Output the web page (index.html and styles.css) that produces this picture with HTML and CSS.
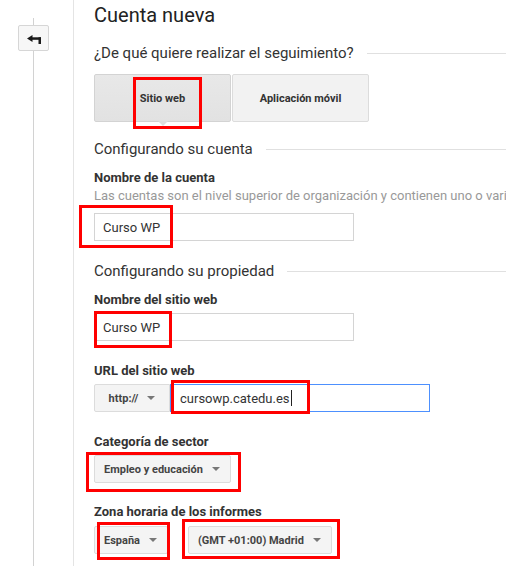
FILE: index.html
```html
<!DOCTYPE html>
<html lang="es">
<head>
<meta charset="utf-8">
<title>Cuenta nueva</title>
<link rel="stylesheet" href="styles.css">
</head>
<body>
<div class="page">
  <aside class="rail">
    <span class="rail-seg"></span>
    <button class="back" type="button" aria-label="Volver">
      <svg width="14" height="9" viewBox="0 0 14 9"><path d="M0 3.5 L5.5 0 L5.5 7 Z" fill="#1a1a1a"/><rect x="4" y="2.3" width="10" height="2.5" fill="#1a1a1a"/><rect x="11.5" y="2.3" width="2.5" height="6.7" fill="#1a1a1a"/></svg>
    </button>
    <span class="rail-line"></span>
  </aside>
  <main class="content">
    <h1 class="title">Cuenta nueva</h1>
    <div class="section q">
      <span>¿De qué quiere realizar el seguimiento?</span><span class="rule"></span>
    </div>
    <div class="tabs">
      <div class="tab active">Sitio web<span class="notch"></span></div>
      <div class="tab">Aplicación móvil</div>
    </div>
    <div class="section s1">
      <span>Configurando su cuenta</span><span class="rule"></span>
    </div>
    <div class="label l1">Nombre de la cuenta</div>
    <div class="desc">Las cuentas son el nivel superior de organización y contienen uno o varias</div>
    <div class="input i1">Curso WP</div>
    <div class="section s2">
      <span>Configurando su propiedad</span><span class="rule"></span>
    </div>
    <div class="label l2">Nombre del sitio web</div>
    <div class="input i2">Curso WP</div>
    <div class="label l3">URL del sitio web</div>
    <div class="row">
      <div class="btn proto">http://<span class="caret"></span></div>
      <div class="input url">cursowp.catedu.es<span class="cursor"></span></div>
    </div>
    <div class="label l3">Categoría de sector</div>
    <div class="row">
      <div class="btn">Empleo y educación<span class="caret"></span></div>
    </div>
    <div class="label l4">Zona horaria de los informes</div>
    <div class="row gap">
      <div class="btn">España<span class="caret"></span></div>
      <div class="btn">(GMT +01:00) Madrid<span class="caret"></span></div>
    </div>
  </main>
  <span class="mark m1"></span>
  <span class="mark m2"></span>
  <span class="mark m3"></span>
  <span class="mark m4"></span>
  <span class="mark m5"></span>
  <span class="mark m6"></span>
  <span class="mark m7"></span>
</div>
</body>
</html>
```
FILE: styles.css
```css
html, body {
  margin: 0;
  padding: 0;
  background: #fff;
}
body {
  font-family: Roboto, "Liberation Sans", Arial, sans-serif;
  color: #222;
}
.page {
  position: relative;
  display: flex;
  width: 506px;
  height: 566px;
  overflow: hidden;
}
.rail {
  box-sizing: border-box;
  width: 74px;
  flex: 0 0 74px;
  padding-right: 6px;
  border-right: 1px solid #e4e4e4;
  display: flex;
  flex-direction: column;
  align-items: center;
}
.rail-seg {
  width: 1px;
  height: 7px;
  margin-top: 18px;
  background: #d2d2d2;
}
.rail-line {
  width: 1px;
  flex: 1;
  background: #d2d2d2;
}
.back {
  box-sizing: border-box;
  width: 31px;
  height: 26px;
  padding: 0;
  border: 1px solid #d6d6d6;
  border-radius: 2px;
  background: #f7f7f7;
  display: flex;
  align-items: center;
  justify-content: center;
}
.back svg { display: block; margin-top: 2px; margin-left: 1px; }
.content {
  flex: 1;
  min-width: 0;
  padding: 3px 0 0 20px;
  white-space: nowrap;
}
.title {
  margin: 0;
  font-size: 20px;
  line-height: 24px;
  font-weight: 400;
  color: #222;
}
.section {
  display: flex;
  align-items: center;
  font-size: 15px;
  line-height: 20px;
  color: #333;
}
.section .rule {
  flex: 1;
  height: 1px;
  background: #e0e0e0;
  margin-left: 13px;
}
.q { margin-top: 16px; }
.s1 { margin-top: 17px; }
.s2 { margin-top: 20px; }
.tabs {
  display: flex;
  margin-top: 11px;
}
.tab {
  position: relative;
  box-sizing: border-box;
  width: 137px;
  height: 48px;
  display: flex;
  align-items: center;
  justify-content: center;
  font-size: 11px;
  font-weight: 700;
  color: #333;
  background: #f2f2f2;
  border: 1px solid #dcdcdc;
  border-radius: 2px;
}
.tab + .tab { margin-left: 1px; }
.tab.active {
  background: linear-gradient(#e8e8e8, #e2e2e2);
  border-color: #d3d3d3;
}
.notch {
  position: absolute;
  left: 50%;
  bottom: -5px;
  margin-left: -5px;
  width: 0;
  height: 0;
  border-left: 5px solid transparent;
  border-right: 5px solid transparent;
  border-top: 5px solid #dedede;
}
.label {
  font-size: 13px;
  line-height: 16px;
  font-weight: 700;
  color: #333;
  margin-bottom: 5px;
}
.l1 { margin-top: 11px; margin-bottom: 2px; }
.l2 { margin-top: 11px; }
.l3 { margin-top: 22px; }
.l4 { margin-top: 21px; margin-bottom: 6px; }
.desc {
  font-size: 13px;
  line-height: 16px;
  color: #999;
  margin-bottom: 9px;
  overflow: hidden;
}
.input {
  box-sizing: border-box;
  width: 260px;
  height: 28px;
  display: flex;
  align-items: center;
  padding-left: 8px;
  border: 1px solid #d4d4d4;
  font-size: 13px;
  color: #333;
}
.row {
  display: flex;
  align-items: center;
}
.row.gap { gap: 20px; }
.btn {
  box-sizing: border-box;
  height: 28px;
  display: flex;
  align-items: center;
  padding: 0 10px 0 9px;
  background: #f4f4f4;
  border: 1px solid #dcdcdc;
  border-radius: 2px;
  font-size: 11px;
  font-weight: 700;
  color: #444;
}
.btn.proto {
  width: 76px;
  justify-content: center;
  padding: 0;
  border-radius: 2px 0 0 2px;
}
.caret {
  width: 0;
  height: 0;
  margin-left: 9px;
  border-left: 4px solid transparent;
  border-right: 4px solid transparent;
  border-top: 4px solid #777;
}
.input.url {
  width: 260px;
  padding-left: 9px;
  border: 1px solid #4d90fe;
  font-size: 13px;
}
.cursor {
  display: inline-block;
  width: 1px;
  height: 16px;
  background: #222;
  margin-left: 1px;
}
.mark {
  position: absolute;
  box-sizing: border-box;
  border: 3px solid #f00;
}
.m1 { left: 133px; top: 77px; width: 69px; height: 52px; }
.m2 { left: 79px; top: 205px; width: 94px; height: 43px; }
.m3 { left: 94px; top: 311px; width: 78px; height: 37px; }
.m4 { left: 171px; top: 380px; width: 139px; height: 34px; }
.m5 { left: 86px; top: 452px; width: 155px; height: 40px; }
.m6 { left: 97px; top: 522px; width: 73px; height: 38px; }
.m7 { left: 182px; top: 519px; width: 158px; height: 40px; }
```
